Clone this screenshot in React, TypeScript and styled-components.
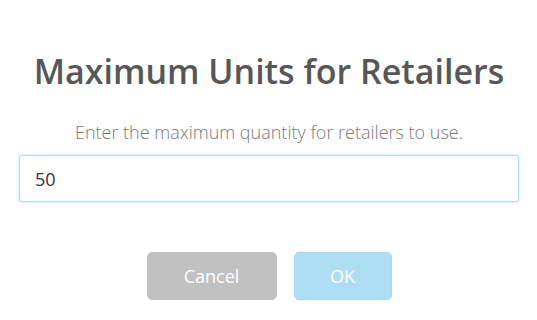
import styled, { createGlobalStyle } from "styled-components";

const GlobalStyle = createGlobalStyle`
  html, body {
    margin: 0;
    padding: 0;
    background: #ffffff;
    font-family: "Open Sans", "Liberation Sans", sans-serif;
  }
`;

const Dialog = styled.div`
  width: 537px;
  height: 320px;
  box-sizing: border-box;
  padding: 50px 18px 0 19px;
  display: flex;
  flex-direction: column;
  align-items: center;
  background: #fff;
`;

const Title = styled.h2`
  margin: 0;
  font-size: 34px;
  line-height: 43px;
  font-weight: 600;
  color: #575757;
  text-align: center;
`;

const Message = styled.p`
  margin: 27px 0 0;
  font-size: 18px;
  line-height: 24px;
  font-weight: 300;
  color: #797979;
  text-align: center;
`;

const Field = styled.input`
  margin-top: 11px;
  width: 100%;
  height: 47px;
  box-sizing: border-box;
  padding: 0 15px;
  border: 1px solid #b4dbed;
  border-radius: 3px;
  box-shadow: 0 0 3px #c4e6f5;
  font-family: inherit;
  font-size: 18px;
  color: #333;
  outline: none;
`;

const Actions = styled.div`
  margin-top: 50px;
  display: flex;
  gap: 17px;
  justify-content: center;
`;

const Button = styled.button<{ $tone: "cancel" | "confirm" }>`
  height: 48px;
  padding: 0;
  width: ${(p) => (p.$tone === "cancel" ? "130px" : "98px")};
  border: 1px solid ${(p) => (p.$tone === "cancel" ? "#c1c1c1" : "#a6dbf3")};
  border-radius: 5px;
  background: ${(p) => (p.$tone === "cancel" ? "#c1c1c1" : "#aedef4")};
  color: #fff;
  font-family: inherit;
  font-size: 18px;
  font-weight: 400;
  cursor: pointer;
`;

export default function App() {
  return (
    <>
      <GlobalStyle />
      <Dialog>
        <Title>Maximum Units for Retailers</Title>
        <Message>Enter the maximum quantity for retailers to use.</Message>
        <Field defaultValue="50" />
        <Actions>
          <Button $tone="cancel">Cancel</Button>
          <Button $tone="confirm">OK</Button>
        </Actions>
      </Dialog>
    </>
  );
}
